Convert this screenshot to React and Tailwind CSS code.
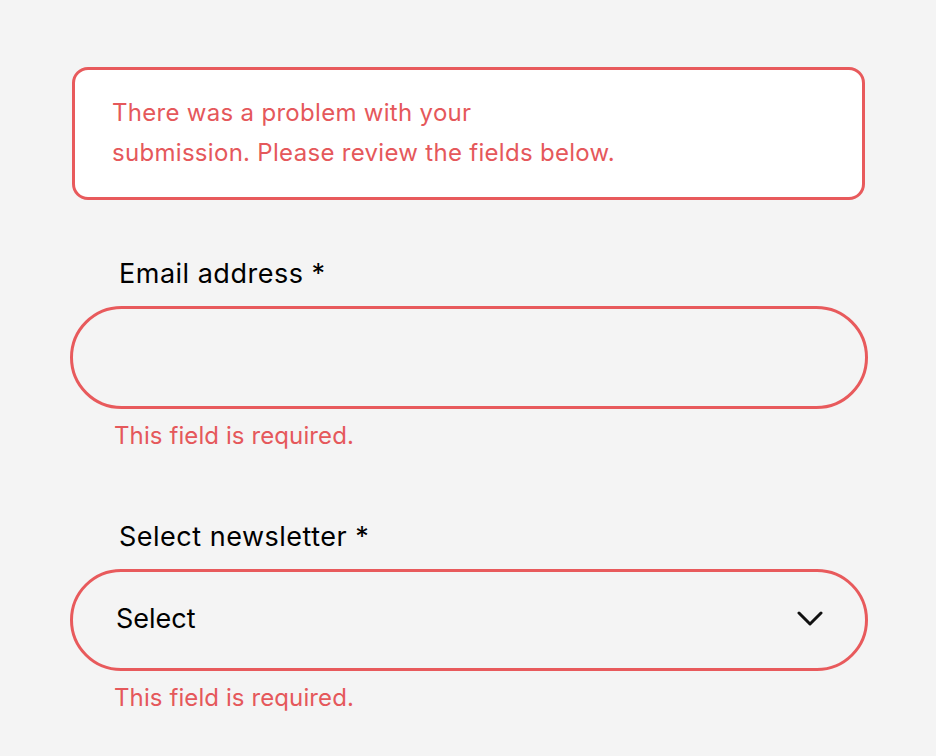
export default function App() {
  return (
    <div className="min-h-[756px] w-full bg-[#f4f4f4] pl-[72px] pr-[71px] pt-[67px]" style={{ fontFamily: "Inter, 'Noto Sans', sans-serif" }}>
      <div className="rounded-[16px] border-[3px] border-[#e85a5c] bg-white pl-[37px] pt-[23px] pb-[24px] text-[24px] leading-[40px] tracking-[0.3px] text-[#e5585b]">
        There was a problem with your
        <br />
        submission. Please review the fields below.
      </div>

      <div className="mt-[58px] pl-[47px] text-[27px] leading-[32px] tracking-[0.5px] text-black">Email address *</div>
      <div className="-ml-[2px] -mr-[3px] mt-[16px] h-[103px] rounded-full border-[3px] border-[#e85a5c] bg-[#f4f4f4]" />
      <div className="mt-[13px] pl-[42px] text-[24px] leading-[28px] tracking-[0.1px] text-[#e5585b]">This field is required.</div>

      <div className="mt-[71px] pl-[47px] text-[27px] leading-[32px] tracking-[0.5px] text-black">Select newsletter *</div>
      <div className="-ml-[2px] -mr-[3px] mt-[16px] flex h-[102px] items-center justify-between rounded-full border-[3px] border-[#e85a5c] bg-[#f4f4f4] pb-[3px] pl-[43px] pr-[42px]">
        <span className="text-[27px] leading-[32px] text-black">Select</span>
        <svg width="26" height="16" viewBox="0 0 26 16" fill="none">
          <path d="M2 2 L13 13 L24 2" stroke="#111" strokeWidth="3" strokeLinecap="round" strokeLinejoin="round" />
        </svg>
      </div>
      <div className="mt-[13px] pl-[42px] text-[24px] leading-[28px] tracking-[0.1px] text-[#e5585b]">This field is required.</div>
    </div>
  );
}
